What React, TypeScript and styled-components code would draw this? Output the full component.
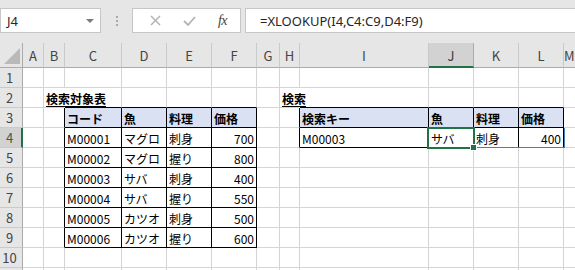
import React from "react";
import styled, { createGlobalStyle } from "styled-components";

const GlobalStyle = createGlobalStyle`
  html, body { margin: 0; padding: 0; background: #ffffff; }
  body { font-family: "Noto Sans CJK JP", "Noto Sans", sans-serif; }
`;

const GREEN = "#217346";
const GRID = "#d4d4d4";
const HEAD_BG = "#e6e6e6";
const HEAD_SEL = "#d2d2d2";

const Page = styled.div`
  width: 575px;
  height: 270px;
  overflow: hidden;
  background: #ffffff;
  display: flex;
  flex-direction: column;
`;

const Ribbon = styled.div`
  height: 43px;
  flex: none;
  background: ${HEAD_BG};
  display: flex;
  align-items: flex-start;
  padding-top: 8px;
  box-sizing: border-box;
`;

const NameBox = styled.div`
  width: 101px;
  height: 25px;
  flex: none;
  box-sizing: border-box;
  background: #ffffff;
  border: 1px solid #c6c6c6;
  display: flex;
  align-items: center;
  justify-content: space-between;
  padding: 0 6px 0 6px;
  font-family: "Noto Sans", sans-serif;
  font-size: 13px;
  color: #262626;
`;

const Caret = styled.span`
  width: 0;
  height: 0;
  border-left: 4px solid transparent;
  border-right: 4px solid transparent;
  border-top: 4px solid #7a7a7a;
`;

const Grip = styled.div`
  width: 31px;
  height: 25px;
  flex: none;
  display: flex;
  flex-direction: column;
  align-items: center;
  justify-content: center;
  gap: 2px;
`;

const GripDot = styled.span`
  width: 2px;
  height: 2px;
  background: #a8a8a8;
`;

const FxBox = styled.div`
  width: 109px;
  height: 25px;
  flex: none;
  box-sizing: border-box;
  background: #ffffff;
  border: 1px solid #c6c6c6;
  display: flex;
  align-items: center;
  justify-content: space-around;
  padding: 0 2px 0 6px;
`;

const FxLabel = styled.span`
  font-family: "Liberation Serif", serif;
  font-style: italic;
  font-size: 14px;
  color: #444444;
  letter-spacing: -0.5px;
`;

const FormulaBox = styled.div`
  flex: 1;
  height: 25px;
  margin-left: 4px;
  box-sizing: border-box;
  background: #ffffff;
  border: 1px solid #c6c6c6;
  border-right: none;
  display: flex;
  align-items: center;
  padding-left: 14px;
  font-family: "Noto Sans", sans-serif;
  font-size: 13px;
  color: #262626;
  white-space: nowrap;
`;

const Sheet = styled.div`
  position: relative;
  flex: 1;
  display: grid;
  grid-template-columns: 23px 21px 21px 57px 45px 45px 45px 23px 20px 129px 45px 45px 45px 1fr;
  grid-template-rows: 25px repeat(11, 20px);
  font-size: 12px;
  color: #000000;
`;

const Corner = styled.div`
  position: relative;
  background: ${HEAD_BG};
  border-right: 1px solid #ababab;
  border-bottom: 1px solid #ababab;
  box-sizing: border-box;
`;

const CornerTri = styled.span`
  position: absolute;
  right: 2px;
  bottom: 3px;
  width: 0;
  height: 0;
  border-left: 16px solid transparent;
  border-bottom: 16px solid #b9b9b9;
`;

const ColHead = styled.div<{ $sel?: boolean }>`
  background: ${(p) => (p.$sel ? HEAD_SEL : HEAD_BG)};
  border-right: 1px solid ${(p) => (p.$sel ? "#ababab" : "#cacaca")};
  border-bottom: ${(p) => (p.$sel ? `2px solid ${GREEN}` : "1px solid #ababab")};
  box-sizing: border-box;
  display: flex;
  align-items: center;
  justify-content: center;
  padding-top: ${(p) => (p.$sel ? "1px" : "0")};
  font-size: 13px;
  color: ${(p) => (p.$sel ? "#3f3f3f" : "#444444")};
`;

const RowHead = styled.div<{ $sel?: boolean }>`
  background: ${(p) => (p.$sel ? HEAD_SEL : HEAD_BG)};
  border-right: ${(p) => (p.$sel ? `2px solid ${GREEN}` : "1px solid #ababab")};
  border-bottom: 1px solid #cacaca;
  box-sizing: border-box;
  display: flex;
  align-items: center;
  justify-content: center;
  padding-right: ${(p) => (p.$sel ? "2px" : "3px")};
  font-size: 13px;
  color: ${(p) => (p.$sel ? "#3a5f48" : "#444444")};
`;

const Cell = styled.div<{
  $right: string;
  $bottom: string;
  $align: "left" | "right";
  $bold?: boolean;
  $under?: boolean;
  $fill?: string;
  $spill?: boolean;
}>`
  box-sizing: border-box;
  border-right: 1px solid ${(p) => p.$right};
  border-bottom: 1px solid ${(p) => p.$bottom};
  background: ${(p) => p.$fill || "transparent"};
  display: flex;
  align-items: center;
  justify-content: ${(p) => (p.$align === "right" ? "flex-end" : "flex-start")};
  padding: 1px 2px 0 2px;
  white-space: nowrap;
  overflow: ${(p) => (p.$spill ? "visible" : "hidden")};
  font-weight: ${(p) => (p.$bold ? 700 : 400)};
  text-decoration: ${(p) => (p.$under ? "underline" : "none")};
  text-underline-offset: 2px;
`;

const SelBox = styled.div`
  position: absolute;
  left: 427px;
  top: 84px;
  width: 48px;
  height: 22px;
  box-sizing: border-box;
  border: 2px solid ${GREEN};
  pointer-events: none;
`;

const FillHandle = styled.span`
  position: absolute;
  right: -4px;
  bottom: -4px;
  width: 5px;
  height: 5px;
  background: ${GREEN};
  border: 1px solid #ffffff;
`;

const SpillBox = styled.div`
  position: absolute;
  left: 429px;
  top: 85px;
  width: 136px;
  height: 20px;
  box-sizing: border-box;
  border-right: 1px solid #4a7ebb;
  border-bottom: 1px solid #4a7ebb;
  pointer-events: none;
`;

type CellData = {
  t: string;
  bold?: boolean;
  under?: boolean;
  align?: "left" | "right";
  fill?: string;
  spill?: boolean;
};

const COLS = ["A", "B", "C", "D", "E", "F", "G", "H", "I", "J", "K", "L", "M"];
const ROWS = 11;
const HDR_FILL = "#d9e1f2";

const data: Record<string, CellData> = {};
const put = (r: number, c: number, d: CellData) => {
  data[`${r},${c}`] = d;
};

put(2, 2, { t: "検索対象表", bold: true, under: true, spill: true });
put(2, 8, { t: "検索", bold: true, under: true, spill: true });

["コード", "魚", "料理", "価格"].forEach((h, i) => put(3, 3 + i, { t: h, bold: true, fill: HDR_FILL }));
["検索キー", "魚", "料理", "価格"].forEach((h, i) => put(3, 9 + i, { t: h, bold: true, fill: HDR_FILL }));

const rows1: [string, string, string, number][] = [
  ["M00001", "マグロ", "刺身", 700],
  ["M00002", "マグロ", "握り", 800],
  ["M00003", "サバ", "刺身", 400],
  ["M00004", "サバ", "握り", 550],
  ["M00005", "カツオ", "刺身", 500],
  ["M00006", "カツオ", "握り", 600],
];
rows1.forEach((row, i) => {
  put(4 + i, 3, { t: row[0] });
  put(4 + i, 4, { t: row[1] });
  put(4 + i, 5, { t: row[2] });
  put(4 + i, 6, { t: String(row[3]), align: "right" });
});

put(4, 9, { t: "M00003" });
put(4, 10, { t: "サバ" });
put(4, 11, { t: "刺身" });
put(4, 12, { t: "400", align: "right" });

const inTable = (r: number, c: number) =>
  (r >= 3 && r <= 9 && c >= 3 && c <= 6) || (r >= 3 && r <= 4 && c >= 9 && c <= 12);

const SEL_ROW = 4;
const SEL_COL = 10;

function CrossIcon() {
  return (
    <svg width="11" height="11" viewBox="0 0 11 11">
      <path d="M1 1 L10 10 M10 1 L1 10" stroke="#b4b4b4" strokeWidth="1.5" fill="none" />
    </svg>
  );
}

function CheckIcon() {
  return (
    <svg width="13" height="10" viewBox="0 0 13 10">
      <path d="M1 5 L5 9 L12 1" stroke="#b4b4b4" strokeWidth="1.8" fill="none" />
    </svg>
  );
}

export default function App() {
  const cells: React.ReactNode[] = [];
  for (let r = 0; r <= ROWS; r++) {
    for (let c = 0; c <= 13; c++) {
      const key = `${r}-${c}`;
      if (r === 0 && c === 0) {
        cells.push(
          <Corner key={key}>
            <CornerTri />
          </Corner>
        );
      } else if (r === 0) {
        cells.push(
          <ColHead key={key} $sel={c === SEL_COL}>
            {COLS[c - 1]}
          </ColHead>
        );
      } else if (c === 0) {
        cells.push(
          <RowHead key={key} $sel={r === SEL_ROW}>
            {r < ROWS ? r : ""}
          </RowHead>
        );
      } else {
        const d = data[`${r},${c}`];
        const right = inTable(r, c) || inTable(r, c + 1) ? "#000000" : d?.spill ? "#ffffff" : GRID;
        const bottom = inTable(r, c) || inTable(r + 1, c) ? "#000000" : GRID;
        cells.push(
          <Cell
            key={key}
            $right={right}
            $bottom={bottom}
            $align={d?.align || "left"}
            $bold={d?.bold}
            $under={d?.under}
            $fill={d?.fill}
            $spill={d?.spill}
          >
            {d?.t}
          </Cell>
        );
      }
    }
  }

  return (
    <Page>
      <GlobalStyle />
      <Ribbon>
        <NameBox>
          <span>J4</span>
          <Caret />
        </NameBox>
        <Grip>
          <GripDot />
          <GripDot />
          <GripDot />
        </Grip>
        <FxBox>
          <CrossIcon />
          <CheckIcon />
          <FxLabel>fx</FxLabel>
        </FxBox>
        <FormulaBox>=XLOOKUP(I4,C4:C9,D4:F9)</FormulaBox>
      </Ribbon>
      <Sheet>
        {cells}
        <SpillBox />
        <SelBox>
          <FillHandle />
        </SelBox>
      </Sheet>
    </Page>
  );
}
